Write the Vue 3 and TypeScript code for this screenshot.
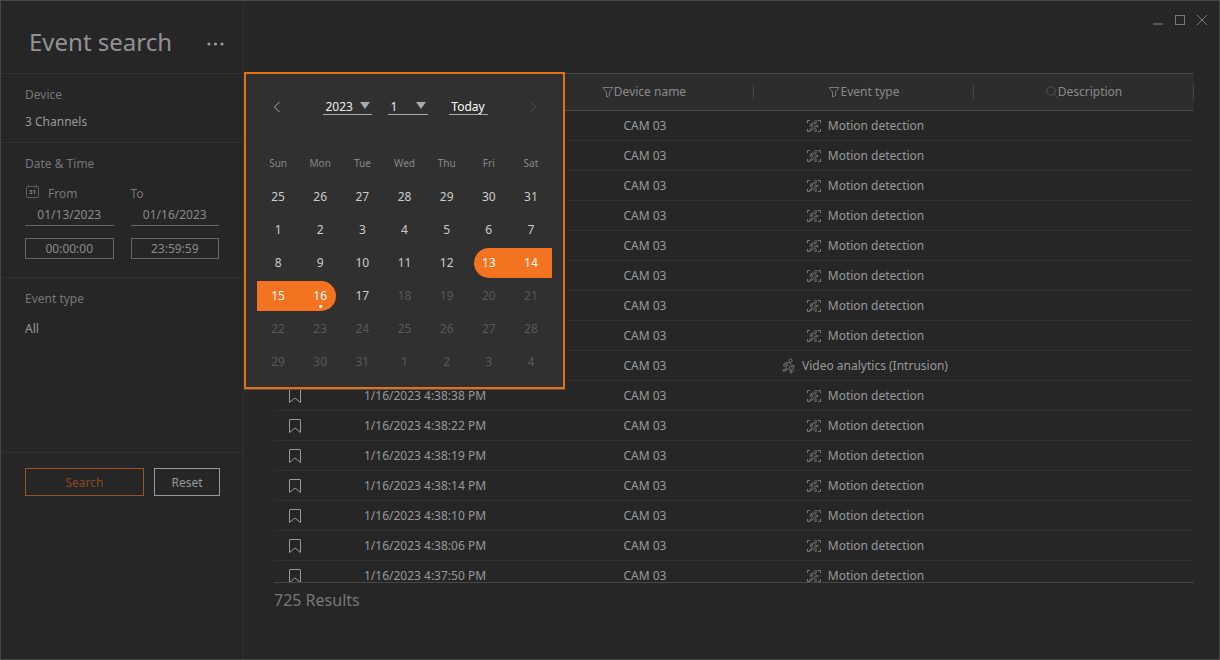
<script setup lang="ts">
import { ref } from 'vue'

type EventKind = 'motion' | 'intrusion'

interface EventRow {
  time: string
  device: string
  kind: EventKind
}

interface Day {
  label: number
  muted: boolean
  selected: boolean
  start: boolean
  end: boolean
}

const eventLabels: Record<EventKind, string> = {
  motion: 'Motion detection',
  intrusion: 'Video analytics (Intrusion)',
}

const times = [
  '', '', '', '', '', '', '', '', '',
  '1/16/2023 4:38:38 PM',
  '1/16/2023 4:38:22 PM',
  '1/16/2023 4:38:19 PM',
  '1/16/2023 4:38:14 PM',
  '1/16/2023 4:38:10 PM',
  '1/16/2023 4:38:06 PM',
  '1/16/2023 4:37:50 PM',
]

const rows: EventRow[] = times.map((time, i) => ({
  time,
  device: 'CAM 03',
  kind: i === 8 ? 'intrusion' : 'motion',
}))

const weekdays = ['Sun', 'Mon', 'Tue', 'Wed', 'Thu', 'Fri', 'Sat']

const rangeStart = 19
const rangeEnd = 22
const lastEnabled = 23

const labels = [
  25, 26, 27, 28, 29, 30, 31,
  1, 2, 3, 4, 5, 6, 7,
  8, 9, 10, 11, 12, 13, 14,
  15, 16, 17, 18, 19, 20, 21,
  22, 23, 24, 25, 26, 27, 28,
  29, 30, 31, 1, 2, 3, 4,
]

const days: Day[] = labels.map((label, i) => ({
  label,
  muted: i > lastEnabled,
  selected: i >= rangeStart && i <= rangeEnd,
  start: i === rangeStart,
  end: i === rangeEnd,
}))

const fromDate = ref('01/13/2023')
const toDate = ref('01/16/2023')
const fromTime = ref('00:00:00')
const toTime = ref('23:59:59')
const year = ref('2023')
const month = ref('1')
</script>

<template>
  <div class="window">
    <aside class="sidebar">
      <header class="title-bar">
        <h1>Event search</h1>
        <button class="plain more" aria-label="More options">
          <svg width="18" height="4" viewBox="0 0 18 4"><circle cx="2" cy="2" r="1.6" /><circle cx="8.5" cy="2" r="1.6" /><circle cx="15" cy="2" r="1.6" /></svg>
        </button>
      </header>

      <section class="block device">
        <h2>Device</h2>
        <p>3 Channels</p>
      </section>

      <section class="block">
        <h2>Date &amp; Time</h2>
        <div class="range">
          <div class="field">
            <label for="from-date" class="with-icon">
              <svg class="cal" width="15" height="15" viewBox="0 0 15 15" fill="none" stroke="currentColor">
                <rect x="1.5" y="1.5" width="12" height="11" rx="1" />
                <path d="M3.5 0v2.5M11.5 0v2.5" />
                <text x="7.5" y="9" text-anchor="middle">31</text>
              </svg>
              From
            </label>
            <input id="from-date" v-model="fromDate" class="date" type="text">
            <input v-model="fromTime" class="time" type="text" aria-label="From time">
          </div>
          <div class="field">
            <label for="to-date">To</label>
            <input id="to-date" v-model="toDate" class="date" type="text">
            <input v-model="toTime" class="time" type="text" aria-label="To time">
          </div>
        </div>
      </section>

      <section class="block types">
        <h2>Event type</h2>
        <p>All</p>
      </section>

      <div class="actions">
        <button class="search">Search</button>
        <button class="reset">Reset</button>
      </div>
    </aside>

    <main class="main">
      <div class="controls">
        <button class="plain" aria-label="Minimize">
          <svg width="12" height="12" viewBox="0 0 12 12"><path d="M1 9h10v2H1z" fill="#555" /></svg>
        </button>
        <button class="plain" aria-label="Maximize">
          <svg width="12" height="12" viewBox="0 0 12 12"><rect x="1.5" y="1.5" width="9" height="9" fill="none" stroke="#777" /></svg>
        </button>
        <button class="plain" aria-label="Close">
          <svg width="12" height="12" viewBox="0 0 12 12"><path d="M1 1l10 10M11 1L1 11" fill="none" stroke="#777" /></svg>
        </button>
      </div>

      <div class="results">
        <table>
          <colgroup>
            <col class="mark-col"><col><col><col><col>
          </colgroup>
          <thead>
            <tr>
              <th aria-label="Bookmark"></th>
              <th aria-label="Date and time"></th>
              <th>
                <span class="head">
                  <svg width="12" height="12" viewBox="0 0 12 12" class="line-icon"><path d="M1 1.5h10L7.5 6v3.5l-3 1.5V6z" /></svg>Device name
                </span>
              </th>
              <th>
                <span class="head">
                  <svg width="12" height="12" viewBox="0 0 12 12" class="line-icon"><path d="M1 1.5h10L7.5 6v3.5l-3 1.5V6z" /></svg>Event type
                </span>
              </th>
              <th>
                <span class="head">
                  <svg width="12" height="12" viewBox="0 0 12 12" class="line-icon dim"><circle cx="5" cy="5" r="4.2" /><path d="M8 8l3.2 3.2" /></svg>Description
                </span>
              </th>
            </tr>
          </thead>
          <tbody>
            <tr v-for="(row, i) in rows" :key="i">
              <td>
                <button class="plain mark" aria-label="Bookmark">
                  <svg width="14" height="16" viewBox="0 0 14 16" fill="none" stroke="#999"><path d="M1.5 14.5V2q0-.5.5-.5h10q.5 0 .5.5v12.5L7 10z" /></svg>
                </button>
              </td>
              <td>{{ row.time }}</td>
              <td>{{ row.device }}</td>
              <td>
                <span class="event">
                  <svg v-if="row.kind === 'motion'" width="16" height="14" viewBox="0 0 16 14" class="line-icon">
                    <path d="M1.5 4V1.5h2.5M12 1.5h2.5V4M14.5 10v2.5H12M4 12.5H1.5V10" />
                    <g stroke-width=".8">
                      <circle cx="9.8" cy="2.6" r="1.3" />
                      <path d="M4 7l.7-2L6.4 3.9l2.6.6 1.2 1.8 2 .4-.3 1.2-2.4-.3-.6-.8-.7 1.6 1.9 1.5.3 2.5H9l-.3-1.7-2-1.3-.7 1.9-2.4.5v-1.2l1.5-.4L6.9 5.3l-1.3.4-.6 1.6z" />
                    </g>
                  </svg>
                  <svg v-else width="14" height="16" viewBox="0 0 14 16" class="line-icon" stroke-width=".9">
                    <circle cx="8.6" cy="2.6" r="1.6" />
                    <path d="M1.5 8l.8-2.5L5 4.4l3.2.6 1.5 2.3 2.7.6-.4 1.3-3-.4-.8-1-1 2.1 2.3 1.9.4 3h-1.6L7.7 12 5 10.3l-.8 2.5-3 .4v-1.5l2-.3L5.7 6l-1.9.5L2.8 8.3z" />
                    <path d="M9.5 11.5l2.5-1M10.5 13.5l2-1" />
                  </svg>
                  {{ eventLabels[row.kind] }}
                </span>
              </td>
              <td></td>
            </tr>
          </tbody>
        </table>
      </div>
      <footer class="count">725 Results</footer>
    </main>

    <div class="calendar" role="dialog" aria-label="Choose dates">
      <div class="cal-nav">
        <button class="plain step" aria-label="Previous month">
          <svg width="8" height="12" viewBox="0 0 8 12"><path d="M6.5 1L1.5 6l5 5" fill="none" stroke="#aaa" /></svg>
        </button>
        <div class="pickers">
          <div class="picker year">
            <select v-model="year" aria-label="Year"><option>2023</option></select>
            <svg width="10" height="7" viewBox="0 0 10 7"><path d="M0 0h10L5 7z" /></svg>
          </div>
          <div class="picker month">
            <select v-model="month" aria-label="Month"><option>1</option></select>
            <svg width="10" height="7" viewBox="0 0 10 7"><path d="M0 0h10L5 7z" /></svg>
          </div>
          <button class="today">Today</button>
        </div>
        <button class="plain step" aria-label="Next month" disabled>
          <svg width="8" height="12" viewBox="0 0 8 12"><path d="M1.5 1l5 5-5 5" fill="none" stroke="#4e4e4e" /></svg>
        </button>
      </div>
      <div class="grid weekdays">
        <span v-for="name in weekdays" :key="name">{{ name }}</span>
      </div>
      <div class="grid days">
        <button
          v-for="(day, i) in days"
          :key="i"
          :disabled="day.muted"
          :class="{ selected: day.selected, start: day.start, end: day.end }"
        >
          {{ day.label }}
        </button>
      </div>
    </div>
  </div>
</template>

<style>
body {
  margin: 0;
  background: #262626;
}
</style>

<style scoped>
* {
  box-sizing: border-box;
}

.window {
  position: relative;
  display: flex;
  height: 100vh;
  border: 1px solid #464646;
  background: #262626;
  color: #999;
  font-family: "Noto Sans", sans-serif;
  font-size: 12px;
  line-height: 18px;
}

button,
input,
select {
  margin: 0;
  padding: 0;
  border: 0;
  border-radius: 0;
  background: none;
  color: inherit;
  font: inherit;
}

svg {
  display: block;
  flex: none;
}

.plain {
  display: flex;
}

.line-icon {
  fill: none;
  stroke: #777;
}

.line-icon.dim {
  stroke: #505050;
}

.sidebar {
  flex: none;
  width: 243px;
  border-right: 1px solid #303030;
}

.title-bar {
  display: flex;
  align-items: center;
  justify-content: space-between;
  height: 73px;
  padding: 10px 18px 0 28px;
  border-bottom: 1px solid #303030;
}

h1 {
  margin: 0;
  color: #929292;
  font-size: 24px;
  font-weight: 400;
  line-height: 32px;
}

.more {
  padding-top: 4px;
  fill: #999;
}

.block {
  padding: 12px 24px 18px;
  border-bottom: 1px solid #303030;
}

.device {
  padding-bottom: 11px;
}

.types {
  min-height: 175px;
}

h2 {
  margin: 0 0 12px;
  color: #777;
  font-size: 12px;
  font-weight: 400;
}

.device h2 {
  margin-bottom: 9px;
}

p {
  margin: 0;
}

.range {
  display: grid;
  grid-template-columns: 1fr 1fr;
  gap: 17px;
}

.field {
  display: flex;
  flex-direction: column;
  min-width: 0;
}

label {
  color: #777;
}

.with-icon {
  display: flex;
  gap: 8px;
}

.cal {
  color: #5e5e5e;
}

.cal text {
  fill: #888;
  stroke: none;
  font-size: 6px;
  font-weight: 700;
}

.date,
.time {
  width: 100%;
  color: #8a8a8a;
  text-align: center;
}

.date {
  height: 23px;
  border-bottom: 1px solid #666;
}

.time {
  height: 21px;
  margin-top: 12px;
  border: 1px solid #666;
}

.actions {
  display: flex;
  gap: 10px;
  padding: 15px 23px 0 24px;
}

.actions button {
  height: 28px;
  padding-top: 1px;
  border: 1px solid #999;
}

.actions .search {
  flex: 1;
  border-color: #9a5426;
  color: #8a4a25;
}

.actions .reset {
  width: 66px;
}

.main {
  display: flex;
  flex: 1;
  flex-direction: column;
  min-width: 0;
  padding: 0 25px 0 30px;
}

.controls {
  display: flex;
  flex: none;
  justify-content: flex-end;
  gap: 10px;
  height: 72px;
  margin-right: -14px;
  padding-top: 13px;
}

.controls .plain {
  height: 12px;
}

.results {
  flex: 1;
  min-height: 0;
  overflow: hidden;
  border-bottom: 1px solid #464646;
}

table {
  width: 100%;
  border-collapse: separate;
  border-spacing: 0;
  table-layout: fixed;
}

.mark-col {
  width: 40px;
}

th {
  height: 38px;
  padding: 0;
  border-top: 1px solid #464646;
  border-bottom: 1px solid #464646;
  background: linear-gradient(#464646, #464646) right center / 1px 14px no-repeat #2d2d2d;
  color: #8a8a8a;
  font-weight: 400;
}

.head {
  display: flex;
  align-items: center;
  justify-content: center;
}

td {
  height: 30px;
  padding: 1px 0 0 2px;
  border-bottom: 1px solid #303030;
  text-align: center;
}

.mark {
  margin: 0 auto;
}

.event {
  display: flex;
  align-items: center;
  justify-content: center;
  gap: 6px;
}

.count {
  flex: none;
  height: 76px;
  padding-top: 5px;
  color: #777;
  font-size: 16px;
  line-height: 24px;
}

.calendar {
  position: absolute;
  top: 71px;
  left: 243px;
  width: 321px;
  padding: 22px 11px 10px;
  border: 2px solid #e2720f;
  background: #303030;
  box-shadow: 0 1px 0 #505050;
  color: #ccc;
}

.cal-nav {
  display: flex;
  align-items: center;
  justify-content: space-between;
  padding: 0 15px 0 16px;
}

.step {
  padding-top: 2px;
}

.pickers {
  display: flex;
  color: #eee;
}

.picker {
  position: relative;
  display: flex;
  margin-right: 16px;
  border-bottom: 1px solid #aaa;
}

.picker.year {
  width: 49px;
}

.picker.month {
  width: 40px;
  margin-right: 21px;
}

select {
  width: 100%;
  height: 18px;
  padding: 3px 0 0 3px;
  line-height: 15px;
  appearance: none;
}

.picker svg {
  position: absolute;
  top: 6px;
  right: 2px;
  fill: #aaa;
  pointer-events: none;
}

.today {
  width: 39px;
  height: 19px;
  padding-top: 3px;
  border-bottom: 1px solid #aaa;
  color: #fff;
  line-height: 15px;
}

.grid {
  display: grid;
  grid-template-columns: repeat(7, 1fr);
  text-align: center;
}

.weekdays {
  margin-top: 39px;
  color: #888;
  font-size: 10px;
}

.days {
  row-gap: 3px;
  margin-top: 10px;
}

.days button {
  position: relative;
  height: 30px;
}

.days button:disabled {
  color: #585858;
}

.days .selected {
  background: #f37321;
  color: #fff;
}

.days .start {
  margin-left: 6px;
  padding-right: 6px;
  border-radius: 15px 0 0 15px;
}

.days .end {
  margin-right: 5px;
  padding-left: 5px;
  border-radius: 0 15px 15px 0;
}

.days .end::after {
  content: "";
  position: absolute;
  bottom: 3px;
  left: 20px;
  width: 3px;
  height: 3px;
  border-radius: 1px;
  background: #fff;
}
</style>
